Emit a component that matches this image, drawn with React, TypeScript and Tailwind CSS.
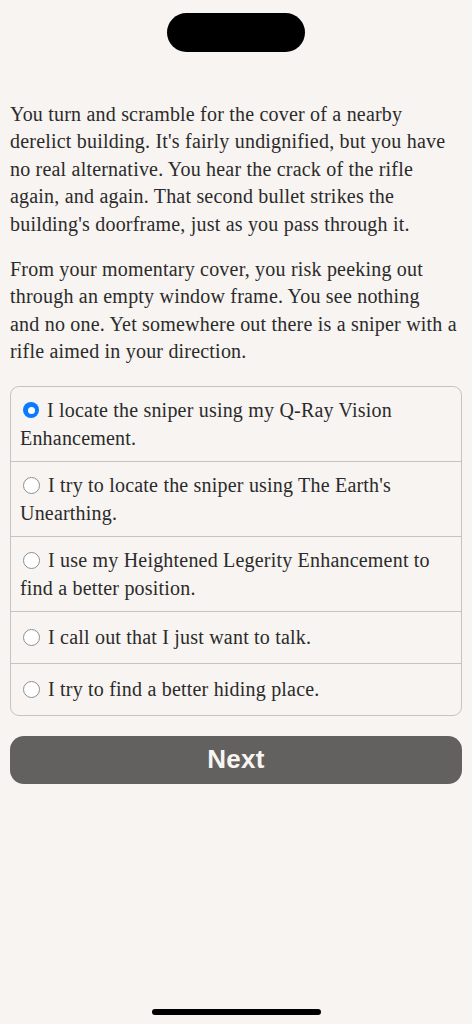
import React, { useState } from "react";

const options: string[][] = [
  ["I locate the sniper using my Q-Ray Vision", "Enhancement."],
  ["I try to locate the sniper using The Earth's", "Unearthing."],
  ["I use my Heightened Legerity Enhancement to", "find a better position."],
  ["I call out that I just want to talk."],
  ["I try to find a better hiding place."],
];

const p1 = [
  "You turn and scramble for the cover of a nearby",
  "derelict building. It's fairly undignified, but you have",
  "no real alternative. You hear the crack of the rifle",
  "again, and again. That second bullet strikes the",
  "building's doorframe, just as you pass through it.",
];

const p2 = [
  "From your momentary cover, you risk peeking out",
  "through an empty window frame. You see nothing",
  "and no one. Yet somewhere out there is a sniper with a",
  "rifle aimed in your direction.",
];

function Lines({ lines }: { lines: string[] }) {
  return (
    <>
      {lines.map((l, i) => (
        <React.Fragment key={i}>
          {l}
          {i < lines.length - 1 ? " " : ""}
          {i < lines.length - 1 && <br />}
        </React.Fragment>
      ))}
    </>
  );
}

export default function App() {
  const [sel, setSel] = useState(0);
  return (
    <div className="min-h-[1024px] w-full bg-[#f7f4f1] text-[#2b2b2b] flex flex-col">
      <div className="flex justify-center pt-[13px]">
        <div className="h-[39px] w-[138px] rounded-full bg-black" />
      </div>
      <div className="px-[10px] pt-[49px] font-['Liberation_Serif',serif] text-[20px] leading-[27.4px] tracking-[0.2px]">
        <p className="mb-[18px] whitespace-nowrap">
          <Lines lines={p1} />
        </p>
        <p className="whitespace-nowrap">
          <Lines lines={p2} />
        </p>
        <div className="mt-[20px] rounded-[9px] border border-[#c6c4c2] overflow-hidden">
          {options.map((o, i) => (
            <div
              key={i}
              onClick={() => setSel(i)}
              className={`flex items-center min-h-[52px] py-[9px] pl-[9px] pr-[4px] leading-[28px] ${
                i > 0 ? "border-t border-[#c6c4c2]" : ""
              }`}
            >
              <div className="whitespace-nowrap">
                <span className="inline-block align-middle relative -top-[2px] mr-[8px] ml-[3px]">
                  {sel === i ? (
                    <span className="flex h-[16px] w-[16px] rounded-full bg-[#0a7aff] items-center justify-center">
                      <span className="block h-[7px] w-[7px] rounded-full bg-white" />
                    </span>
                  ) : (
                    <span className="block h-[17px] w-[17px] rounded-full border-[1.5px] border-[#8e8e8e] bg-white" />
                  )}
                </span>
                <Lines lines={o} />
              </div>
            </div>
          ))}
        </div>
        <button className="mt-[20px] h-[48px] w-full rounded-[14px] bg-[#626160] text-[#f7f4f1] font-['Liberation_Sans',sans-serif] font-bold text-[26px] tracking-[0.3px]">
          Next
        </button>
      </div>
      <div className="flex-1" />
      <div className="flex justify-center pb-[9px]">
        <div className="h-[6px] w-[169px] rounded-full bg-black" />
      </div>
    </div>
  );
}
